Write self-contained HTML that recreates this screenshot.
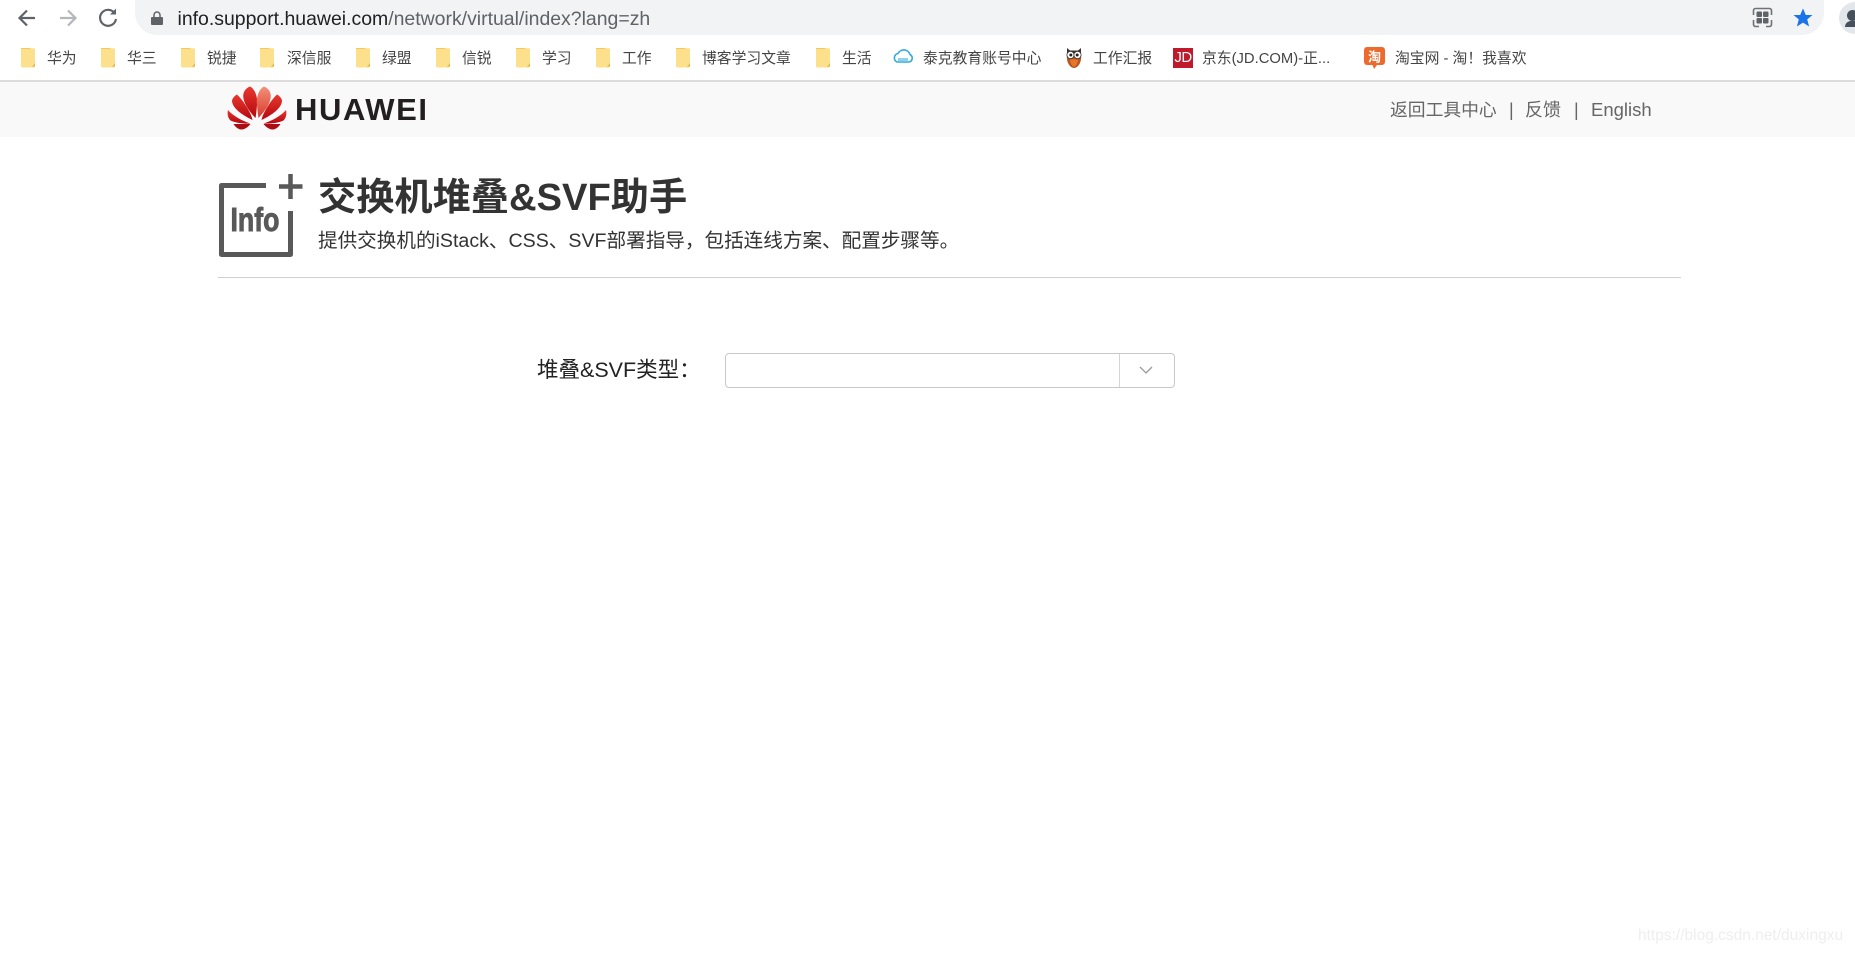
<!DOCTYPE html>
<html lang="zh"><head><meta charset="utf-8"><title>交换机堆叠&amp;SVF助手</title>
<style>
html,body{margin:0;padding:0;background:#fff;width:1855px;height:954px;overflow:hidden}
body{position:relative;font-family:"Liberation Sans","Noto Sans CJK SC",sans-serif;color:#333}
.a{position:absolute;white-space:nowrap}
svg{position:absolute;overflow:visible}
.b{position:absolute;top:48px;height:22px;line-height:22px;font-size:14.800px;color:#444;white-space:nowrap}
.f{position:absolute;top:47px;width:16px;height:21px}
</style></head><body>

<div class="a" style="left:135px;top:-10px;width:1689px;height:45px;border-radius:0 0 22px 22px;background:#f1f3f4"></div>

<svg style="left:0;top:0" width="140" height="36" fill="none" stroke-width="2.2">
<path d="M35 18H20M27 10.5L19.5 18L27 25.5" stroke="#5f6368"/>
<path d="M60 18H75M68 10.5L75.500 18L68 25.500" stroke="#b4b6b9"/>
<path d="M114.500 13A8 8 0 1 0 116 19" stroke="#5f6368"/>
<path d="M116 8.500V14.500H110Z" fill="#5f6368" stroke="none"/>
</svg>
<svg style="left:150px;top:10px" width="14" height="16"><path d="M2 7h10a1 1 0 0 1 1 1v6a1 1 0 0 1-1 1H2a1 1 0 0 1-1-1V8a1 1 0 0 1 1-1z" fill="#5f6368"/><path d="M4 7V5a3 3 0 0 1 6 0v2" fill="none" stroke="#5f6368" stroke-width="1.500"/></svg>
<div class="a" style="left:177.500px;top:7px;font-size:19.450px;line-height:24px;color:#202124">info.support.huawei.com<span style="color:#5f6368">/network/virtual/index?lang=zh</span></div>

<svg style="left:1752px;top:7px" width="21" height="21" fill="none"><path d="M1.500 8V3.500A2 2 0 0 1 3.500 1.500H17.500A2 2 0 0 1 19.500 3.500V8M19.500 13V17.500A2 2 0 0 1 17.500 19.500H14M7 19.500H3.500A2 2 0 0 1 1.500 17.500V13" stroke="#6f7377" stroke-width="1.600"/><rect x="4.500" y="4.500" width="5.500" height="5.500" rx="1" fill="#5f6368"/><rect x="11" y="4.500" width="5.500" height="5.500" rx="1" fill="#5f6368"/><rect x="4.500" y="11" width="5.500" height="5.500" rx="1" fill="#5f6368"/><rect x="11" y="11" width="5.500" height="5.500" rx="1" fill="#5f6368"/></svg>
<svg style="left:1793px;top:8px" width="20" height="20"><path d="M10 0.500L12.800 7H19.500L14.200 11.400L16.100 18.500L10 14.600L3.900 18.500L5.800 11.400L0.500 7H7.200Z" fill="#1a73e8"/></svg>
<div class="a" style="left:1839px;top:2px;width:32px;height:32px;border-radius:50%;background:#e3e6ea;overflow:hidden"><div class="a" style="left:8px;top:8px;width:11px;height:11px;border-radius:50%;background:#474f5a"></div><div class="a" style="left:6px;top:19px;width:20px;height:6px;border-radius:7px 7px 0 0;background:#474f5a"></div></div>

<svg width="0" height="0" style="position:absolute"><defs><symbol id="fd" viewBox="0 0 16 21"><path d="M1 1H10L15 1.500V19A1.500 1.500 0 0 1 13.500 20.500H2.500A1.500 1.500 0 0 1 1 19Z" fill="#fde08c"/><path d="M12 20L15 16V19.500Z" fill="#e3b94e"/><path d="M1 1H10V2H1Z" fill="#f3c95f"/></symbol></defs></svg>
<svg class="f" style="left:20px;top:47px" viewBox="0 0 16 21"><use href="#fd"/></svg><div class="b" style="left:47px">华为</div>
<svg class="f" style="left:100px;top:47px" viewBox="0 0 16 21"><use href="#fd"/></svg><div class="b" style="left:127px">华三</div>
<svg class="f" style="left:180px;top:47px" viewBox="0 0 16 21"><use href="#fd"/></svg><div class="b" style="left:207px">锐捷</div>
<svg class="f" style="left:259px;top:47px" viewBox="0 0 16 21"><use href="#fd"/></svg><div class="b" style="left:287px">深信服</div>
<svg class="f" style="left:355px;top:47px" viewBox="0 0 16 21"><use href="#fd"/></svg><div class="b" style="left:382px">绿盟</div>
<svg class="f" style="left:435px;top:47px" viewBox="0 0 16 21"><use href="#fd"/></svg><div class="b" style="left:462px">信锐</div>
<svg class="f" style="left:515px;top:47px" viewBox="0 0 16 21"><use href="#fd"/></svg><div class="b" style="left:542px">学习</div>
<svg class="f" style="left:595px;top:47px" viewBox="0 0 16 21"><use href="#fd"/></svg><div class="b" style="left:622px">工作</div>
<svg class="f" style="left:675px;top:47px" viewBox="0 0 16 21"><use href="#fd"/></svg><div class="b" style="left:702px">博客学习文章</div>
<svg class="f" style="left:815px;top:47px" viewBox="0 0 16 21"><use href="#fd"/></svg><div class="b" style="left:842px">生活</div>

<svg style="left:892px;top:49px" width="22" height="16" fill="none"><path d="M5 13H17A4 4 0 0 0 18 5.500A6.500 6.500 0 0 0 6 4.500A4.500 4.500 0 0 0 5 13Z" stroke="#35a8de" stroke-width="1.600"/><rect x="6" y="9" width="10" height="3" fill="#8fd0ee"/></svg>
<div class="b" style="left:923px">泰克教育账号中心</div>

<svg style="left:1064px;top:47px" width="20" height="22"><path d="M3 1L6 3.500H14L17 1V9H3Z" fill="#3a3330"/><path d="M3 8C2 15 6 21 10 21C14 21 18 15 17 8Z" fill="#b8561f"/><circle cx="6.500" cy="8" r="3.600" fill="#fff" stroke="#3a3330" stroke-width=".8"/><circle cx="13.500" cy="8" r="3.600" fill="#fff" stroke="#3a3330" stroke-width=".8"/><circle cx="6.800" cy="8" r="1.500" fill="#222"/><circle cx="13.200" cy="8" r="1.500" fill="#222"/><path d="M6 13Q10 11.500 14 13Q13.500 18 10 20Q6.500 18 6 13Z" fill="#e8762a"/></svg>
<div class="b" style="left:1093px">工作汇报</div>

<div class="a" style="left:1173px;top:48px;width:20px;height:20px;background:#c0192c;color:#fff;font:15px/20px 'Liberation Sans',sans-serif;text-align:center;letter-spacing:-.5px">JD</div>
<div class="b" style="left:1202px">京东(JD.COM)-正...</div>

<svg style="left:1364px;top:47px" width="21" height="22"><path d="M3 0H18A3 3 0 0 1 21 3V15A3 3 0 0 1 18 18H13L10 22L8.500 18H3A3 3 0 0 1 0 15V3A3 3 0 0 1 3 0Z" fill="#ec6a2d"/><text x="10.500" y="14.500" font-size="13" font-weight="bold" text-anchor="middle" fill="#fff" font-family="'Noto Sans CJK SC',sans-serif">淘</text></svg>
<div class="b" style="left:1395px">淘宝网 - 淘！我喜欢</div>

<div class="a" style="left:0;top:80px;width:1855px;height:2px;background:#dcdcdc"></div>
<div class="a" style="left:0;top:82px;width:1855px;height:55px;background:#f9f9f9"></div>

<svg style="left:227px;top:85px" width="60" height="46" viewBox="0 0 60 46">
<defs><linearGradient id="r" x1="0" y1="0" x2="0" y2="1"><stop offset="0" stop-color="#e8382e"/><stop offset="1" stop-color="#b5070f"/></linearGradient><linearGradient id="r2" x1="0" y1="0" x2="0" y2="1"><stop offset="0" stop-color="#f4907a"/><stop offset="1" stop-color="#d83a2a"/></linearGradient></defs>
<g fill="url(#r)">
<path d="M28.500 33C20 24 14 14 17 7C19 3 22 2 23 1.500C28 4 31 12 30 20C29.500 26 29 30 28.500 33Z"/>
<path d="M31.500 33C40 24 46 14 43 7C41 3 38 2 37 1.500C32 4 29 12 30 20C30.500 26 31 30 31.500 33Z" fill="url(#r2)"/>
<path d="M25.500 35C15 30 5 23 5 15.500C5.500 13 8 10.500 10 9.500C15 14 24 27 25.500 35Z"/>
<path d="M34.500 35C45 30 55 23 55 15.500C54.500 13 52 10.500 50 9.500C45 14 36 27 34.500 35Z"/>
<path d="M23.500 38.500C15 36 5 30 1 25C0 29 1 33 3.500 35.500C9 38 17 39 23.500 38.500Z"/>
<path d="M36.500 38.500C45 36 55 30 59 25C60 29 59 33 56.500 35.500C51 38 43 39 36.500 38.500Z"/>
<path d="M6.500 39H23.500C21 42 18 44.500 14.500 44.500C11 44.500 8.500 42 6.500 39Z" fill="#ab0d12"/>
<path d="M53.500 39H36.500C39 42 42 44.500 45.500 44.500C49 44.500 51.500 42 53.500 39Z" fill="#ab0d12"/>
</g></svg>
<div class="a" style="left:295px;top:93px;font:bold 31px/34px 'Liberation Sans',sans-serif;color:#231f20;letter-spacing:1.600px">HUAWEI</div>

<div class="a" style="left:1390px;top:97px;font-size:17.800px;line-height:26px;color:#666">返回工具中心</div>
<div class="a" style="left:1509px;top:97px;font-size:18px;line-height:26px;color:#666">|</div>
<div class="a" style="left:1525px;top:97px;font-size:18px;line-height:26px;color:#666">反馈</div>
<div class="a" style="left:1574px;top:97px;font-size:18px;line-height:26px;color:#666">|</div>
<div class="a" style="left:1591px;top:97px;font-size:18.500px;line-height:26px;color:#666">English</div>

<svg style="left:219px;top:174px" width="86" height="84" fill="none" stroke="#595959">
<path d="M47 11.500H2.500V80.500H71.500V37" stroke-width="5" stroke-linejoin="round"/>
<path d="M60 12.500H83.500M71.500 0V25" stroke-width="4.500"/>
<text x="11.500" y="57" font-size="33" font-weight="bold" fill="#595959" stroke="#595959" stroke-width=".9" textLength="49" lengthAdjust="spacingAndGlyphs" font-family="'Liberation Sans',sans-serif">Info</text>
</svg>

<div class="a" style="left:318px;top:173px;font-size:38.200px;font-weight:bold;line-height:50px;color:#333">交换机堆叠&amp;SVF助手</div>
<div class="a" style="left:318px;top:227px;font-size:19.600px;line-height:28px;color:#333">提供交换机的iStack、CSS、SVF部署指导，包括连线方案、配置步骤等。</div>
<div class="a" style="left:218px;top:277px;width:1463px;height:1px;background:#cfcfcf"></div>

<div class="a" style="left:537px;top:356px;font-size:21.500px;line-height:28px;color:#222">堆叠&amp;SVF类型：</div>
<div class="a" style="left:725px;top:353px;width:448px;height:33px;border:1px solid #c8c8c8;border-radius:4px;background:#fff"></div>
<div class="a" style="left:1119px;top:354px;width:1px;height:33px;background:#d5d5d5"></div>
<svg style="left:1139px;top:366px" width="14" height="9" fill="none"><path d="M1 1L7 7L13 1" stroke="#999" stroke-width="1.300"/></svg>

<div class="a" style="left:1638px;top:926px;font-size:15.500px;line-height:20px;color:#eeeeee">https://blog.csdn.net/duxingxu</div>
</body></html>
